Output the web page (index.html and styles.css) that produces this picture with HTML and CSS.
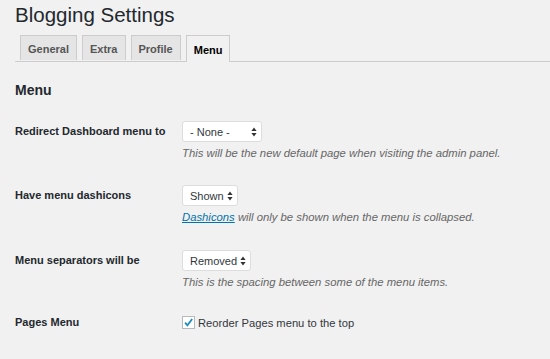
FILE: index.html
```html
<!DOCTYPE html>
<html>
<head>
<meta charset="utf-8">
<link rel="stylesheet" href="styles.css">
</head>
<body>
<div class="wrap">
  <h1 class="title">Blogging Settings</h1>
  <nav class="tabs">
    <span class="tab">General</span>
    <span class="tab">Extra</span>
    <span class="tab">Profile</span>
    <span class="tab active">Menu</span>
  </nav>
  <h2 class="section">Menu</h2>
  <div class="row r1">
    <div class="label">Redirect Dashboard menu to</div>
    <div class="field">
      <span class="select w-none">- None -<svg class="arrows" viewBox="0 0 6 10"><path d="M3 0.5L5.6 4H0.4z M3 9.5L5.6 6H0.4z" fill="#333"/></svg></span>
      <p class="desc">This will be the new default page when visiting the admin panel.</p>
    </div>
  </div>
  <div class="row r2">
    <div class="label">Have menu dashicons</div>
    <div class="field">
      <span class="select">Shown<svg class="arrows" viewBox="0 0 6 10"><path d="M3 0.5L5.6 4H0.4z M3 9.5L5.6 6H0.4z" fill="#333"/></svg></span>
      <p class="desc"><a class="link">Dashicons</a> will only be shown when the menu is collapsed.</p>
    </div>
  </div>
  <div class="row r3">
    <div class="label">Menu separators will be</div>
    <div class="field">
      <span class="select">Removed<svg class="arrows" viewBox="0 0 6 10"><path d="M3 0.5L5.6 4H0.4z M3 9.5L5.6 6H0.4z" fill="#333"/></svg></span>
      <p class="desc">This is the spacing between some of the menu items.</p>
    </div>
  </div>
  <div class="row r4">
    <div class="label">Pages Menu</div>
    <div class="field check-field">
      <span class="checkbox"><svg viewBox="0 0 12 12"><path d="M2.3 6.2L4.8 9L10 2.2" fill="none" stroke="#1e8cbe" stroke-width="2"/></svg></span>
      <span class="check-label">Reorder Pages menu to the top</span>
    </div>
  </div>
</div>
</body>
</html>
```

FILE: styles.css
```css
html, body {
  margin: 0;
  padding: 0;
  background: #f1f1f1;
}
body {
  font-family: "Liberation Sans", Arial, sans-serif;
  color: #23282d;
  font-size: 11px;
}
.wrap {
  padding: 3px 0 0 15px;
}
.title {
  margin: 0;
  font-size: 20.5px;
  font-weight: 400;
  line-height: 24px;
  color: #23282d;
}
.tabs {
  display: flex;
  gap: 5px;
  margin-top: 8px;
  padding-left: 5px;
  border-bottom: 1px solid #ccc;
  height: 26px;
}
.tab {
  display: flex;
  align-items: center;
  justify-content: center;
  height: 25px;
  padding: 1px 7px 0;
  box-sizing: border-box;
  border: 1px solid #ccc;
  border-bottom: none;
  background: #e5e5e5;
  color: #555;
  font-weight: 700;
  font-size: 11px;
}
.tab.active {
  background: #f1f1f1;
  color: #000;
  height: 27px;
  margin-bottom: -1px;
}
.section {
  margin: 19px 0 0;
  font-size: 14px;
  font-weight: 700;
  line-height: 18px;
  color: #23282d;
}
.row {
  display: flex;
}
.r1 { margin-top: 22px; }
.r2 { margin-top: 24px; }
.r3 { margin-top: 25px; }
.r4 { margin-top: 22px; }
.label {
  width: 167px;
  flex: none;
  font-weight: 700;
  font-size: 11px;
  line-height: 21px;
  color: #23282d;
}
.field {
  display: flex;
  flex-direction: column;
  align-items: flex-start;
}
.select {
  box-sizing: border-box;
  height: 21px;
  display: flex;
  align-items: center;
  justify-content: space-between;
  background: #fff;
  border: 1px solid #ddd;
  border-radius: 3px;
  padding: 0 4px 0 7px;
  font-size: 11px;
  color: #32373c;
}
.w-none { width: 80px; }
.arrows {
  width: 6px;
  height: 10px;
  margin-left: 3px;
}
.desc {
  margin: 4px 0 0;
  font-style: italic;
  font-size: 11.3px;
  line-height: 15px;
  color: #666;
}
.link {
  color: #0073aa;
  text-decoration: underline;
}
.check-field {
  flex-direction: row;
  align-items: center;
  gap: 3px;
  height: 21px;
}
.checkbox {
  box-sizing: border-box;
  width: 13px;
  height: 13px;
  border: 1px solid #b4b9be;
  background: #fff;
  display: flex;
  align-items: center;
  justify-content: center;
}
.checkbox svg {
  width: 11px;
  height: 11px;
}
.check-label {
  font-size: 11.2px;
  color: #32373c;
}
```
